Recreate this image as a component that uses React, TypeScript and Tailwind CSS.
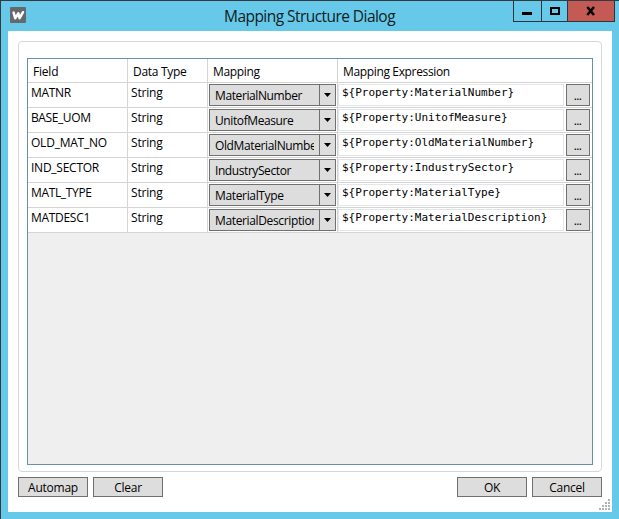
import React from 'react';

const sans = "font-['Open_Sans','Noto_Sans',sans-serif]";

const rows = [
  { field: 'MATNR', fieldClass: 'tracking-[-0.3px]', mapping: 'MaterialNumber', mapClass: 'tracking-[-0.4px]' },
  { field: 'BASE_UOM', fieldClass: 'tracking-[-0.4px]', mapping: 'UnitofMeasure', mapClass: 'tracking-[-0.4px]' },
  { field: 'OLD_MAT_NO', fieldClass: 'tracking-[-0.22px]', mapping: 'OldMaterialNumber', mapClass: 'tracking-[-0.38px]' },
  { field: 'IND_SECTOR', fieldClass: 'tracking-[-0.25px]', mapping: 'IndustrySector', mapClass: 'tracking-[-0.42px]' },
  { field: 'MATL_TYPE', fieldClass: 'tracking-[-0.35px]', mapping: 'MaterialType', mapClass: 'tracking-[-0.35px]' },
  { field: 'MATDESC1', fieldClass: 'tracking-[-0.3px]', mapping: 'MaterialDescription', mapClass: 'tracking-[-0.36px]' },
];

function PushButton({ label, className = '' }: { label: string; className?: string }) {
  return (
    <button className={`h-5 w-[70px] border border-[#707070] bg-[#dddddd] text-center text-[12px] leading-[19px] tracking-[-0.25px] ${className}`}>
      {label}
    </button>
  );
}

function Logo() {
  return (
    <svg className="mt-[6px] block" width="16" height="16" viewBox="0 0 16 16">
      <rect width="16" height="16" rx="1" fill="#65696d" />
      <path d="M3.6 5.6 L5.2 11.2 L8.3 6.4 L9.6 11.2 L13 5.2" fill="none" stroke="#fff" strokeWidth="2.5" strokeLinejoin="round" strokeLinecap="round" />
    </svg>
  );
}

function TitleBar() {
  return (
    <header className="relative flex h-[30px] pl-[9px]">
      <Logo />
      <h1 className="absolute left-[223px] top-[3px] whitespace-nowrap text-[15.5px] leading-6 tracking-[-0.55px] text-[#101c22]">
        Mapping Structure Dialog
      </h1>
      <div className="ml-auto mr-[4px] flex h-[21px] border-x border-b border-[#30343a]">
        <div className="w-[27px]">
          <svg width="27" height="20" className="block"><rect x="8" y="11" width="10" height="3" fill="#000" /></svg>
        </div>
        <div className="w-[26px] border-l border-[#30343a]">
          <svg width="25" height="20" className="block"><rect x="9" y="7" width="8" height="6" fill="none" stroke="#000" strokeWidth="2" /></svg>
        </div>
        <div className="w-[47px] border-l border-[#30343a] bg-[#c45a54]">
          <svg width="46" height="20" className="block"><path d="M19.3 6 L26 14 M26 6 L19.3 14" stroke="#000" strokeWidth="2.6" /></svg>
        </div>
      </div>
    </header>
  );
}

function MappingTable() {
  return (
    <div className="h-[407px] w-[566px] border border-[#6a8db0] bg-[#efefef] text-[12px]">
      <div className="flex h-6 border-b border-[#d4d4d4] bg-white leading-[25px]">
        <div className="w-[100px] border-r border-[#d4d4d4] pl-[5px] tracking-[-0.2px]">Field</div>
        <div className="w-[80px] border-r border-[#d4d4d4] pl-[5px] tracking-[-0.3px]">Data Type</div>
        <div className="w-[130px] border-r border-[#d4d4d4] pl-[5px] tracking-[-0.35px]">Mapping</div>
        <div className="pl-[5px] tracking-[-0.35px]">Mapping Expression</div>
      </div>
      {rows.map((r) => (
        <div key={r.field} className="flex h-[25px] border-b border-[#d4d4d4] bg-white">
          <div className={`w-[100px] border-r border-[#d4d4d4] pl-[3px] leading-[20px] ${r.fieldClass}`}>{r.field}</div>
          <div className="w-[80px] border-r border-[#d4d4d4] pl-[3px] leading-[20px] tracking-[-0.2px]">String</div>
          <div className="w-[130px] border-r border-[#d4d4d4] pl-px pt-px">
            <div className="flex h-[22px] w-[127px] border border-[#707070] bg-[#dddddd]">
              <div className={`ml-[5px] w-[99px] overflow-hidden whitespace-nowrap leading-[22px] ${r.mapClass}`}>{r.mapping}</div>
              <div className="ml-[5px] w-4 border-l border-[#707070]">
                <svg width="15" height="20" className="block"><path d="M4 8 H11 L7.5 12 Z" fill="#000" /></svg>
              </div>
            </div>
          </div>
          <div className="flex pt-px">
            <div className="h-[22px] w-[226px] whitespace-pre border border-[#e3e5e9] pl-[3px] font-['DejaVu_Sans_Mono',monospace] text-[11px] leading-[15px]">
              {'${Property:' + r.mapping + '}'}
            </div>
            <button className="ml-[2px] h-[22px] w-6 border border-[#707070] bg-[#dddddd] pr-px text-center leading-[22px] tracking-[-0.7px]">...</button>
          </div>
        </div>
      ))}
    </div>
  );
}

function ResizeGrip() {
  const dots = [[9, 0], [6, 3], [9, 3], [3, 6], [6, 6], [9, 6], [0, 9], [3, 9], [6, 9], [9, 9]];
  return (
    <svg className="absolute bottom-[2px] right-[2px]" width="11" height="11">
      {dots.map(([x, y]) => <rect key={`${x}-${y}`} x={x} y={y} width="2" height="2" fill="#b2b2b2" />)}
    </svg>
  );
}

export default function App() {
  return (
    <div className={`h-[519px] w-[619px] overflow-hidden border-l border-t border-[#353940] bg-[#66c9e9] text-black ${sans}`}>
      <TitleBar />
      <main className="relative ml-[7px] h-[481px] w-[604px] bg-white px-[10px] pt-[10px]">
        <section className="h-[431px] w-[584px] rounded-[4px] border border-[#d5d7dc] pl-[8px] pt-[16px]">
          <MappingTable />
        </section>
        <div className="mt-[5px] flex gap-[5px]">
          <PushButton label="Automap" />
          <PushButton label="Clear" />
          <PushButton label="OK" className="ml-auto" />
          <PushButton label="Cancel" />
        </div>
        <ResizeGrip />
      </main>
    </div>
  );
}
